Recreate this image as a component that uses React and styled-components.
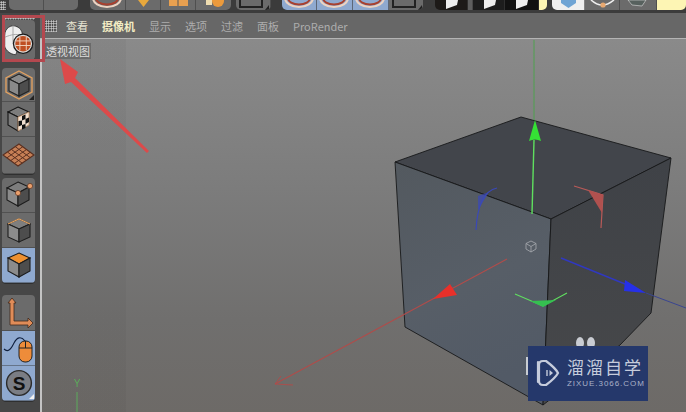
import styled, { createGlobalStyle } from "styled-components";

const GlobalStyle = createGlobalStyle`
  html, body {
    margin: 0;
    padding: 0;
    background: #474747;
    overflow: hidden;
  }
  * { box-sizing: border-box; }
`;

const Page = styled.div`
  position: relative;
  width: 686px;
  height: 412px;
  overflow: hidden;
  display: flex;
  flex-direction: column;
  font-family: "Noto Sans CJK SC", "Liberation Sans", sans-serif;
  background: #474747;
`;

const TopBar = styled.div`
  height: 13px;
  flex: none;
  display: flex;
  gap: 11px;
  background: #3b3b3b;
  overflow: hidden;
`;

const TopHatch = styled.div`
  width: 6px;
  height: 9px;
  margin: 1px -8px 0 0;
  background-image: radial-gradient(#dcdcdc 0.8px, transparent 1px);
  background-size: 2.5px 2.5px;
`;

const TopGroup = styled.div`
  display: flex;
  height: 10px;
  margin-left: ${(p) => p.$ml || 0}px;
  border-radius: 0 0 5px 5px;
  overflow: hidden;
`;

const TopButton = styled.div`
  position: relative;
  flex: none;
  width: ${(p) => p.$w || 35}px;
  height: 10px;
  background: ${(p) => p.$bg || "#6b6b6b"};
  border-right: 1px solid rgba(60, 60, 60, 0.6);
  overflow: hidden;

  svg {
    display: block;
  }
`;

const Body = styled.div`
  flex: 1;
  display: flex;
  min-height: 0;
`;

const Sidebar = styled.aside`
  width: 40px;
  flex: none;
  display: flex;
  flex-direction: column;
  padding: 4px 0 0 2px;
  background: #474747;
`;

const SidebarHatch = styled.div`
  width: 33px;
  height: 3px;
  flex: none;
  background-image: radial-gradient(#cfcfcf 0.7px, transparent 1px);
  background-size: 2.5px 2.5px;
`;

const ToolGroup = styled.div`
  width: 33px;
  margin-top: ${(p) => p.$mt || 0}px;
  border-radius: 4px;
  overflow: hidden;
  box-shadow: 0 1px 0 #2f2f2f;
`;

const ToolButton = styled.div`
  position: relative;
  height: ${(p) => p.$h || 35}px;
  display: flex;
  align-items: center;
  justify-content: center;
  background: ${(p) => (p.$active ? "#8fa9cf" : "#6b6b6b")};
  border-bottom: 1px solid rgba(50, 50, 50, 0.45);

  ${(p) =>
    p.$corner &&
    `&::after {
      content: "";
      position: absolute;
      right: 1px;
      bottom: 1px;
      border-left: 5px solid transparent;
      border-bottom: 5px solid ${p.$corner};
    }`}
`;

const Main = styled.main`
  flex: 1;
  display: flex;
  flex-direction: column;
  min-width: 0;
`;

const MenuBar = styled.nav`
  height: 26px;
  flex: none;
  display: flex;
  align-items: center;
  gap: 14px;
  padding: 1px 0 0 5px;
  background: #676767;
  border-bottom: 1px solid #b4b4b4;
`;

const Hatch = styled.div`
  width: 12px;
  height: 12px;
  margin-right: -5px;
  background-color: #3d3d3d;
  background-image: radial-gradient(#dcdcdc 0.8px, transparent 1px);
  background-size: 2.5px 2.5px;
`;

const MenuItem = styled.span`
  font-size: 11px;
  line-height: 14px;
  white-space: nowrap;
  color: ${(p) => (p.$tone === "bright" ? "#f3edc4" : p.$tone === "mid" ? "#e6e4d2" : "#adadad")};
  font-weight: ${(p) => (p.$tone === "bright" ? 700 : 400)};
`;

const Viewport = styled.section`
  position: relative;
  flex: 1;
  min-height: 0;
  border-left: 2px solid #c4c4c4;
  background:
    linear-gradient(to right, rgba(0, 0, 0, 0.035) 84px, transparent 84px),
    linear-gradient(to bottom, #8a8a8a 0%, #7c7c7c 40%, #706f6e 75%, #6d6a67 100%);
`;

const Scene = styled.svg`
  position: absolute;
  inset: 0;
  width: 100%;
  height: 100%;
  filter: blur(0.35px);
`;

const Tooltip = styled.div`
  position: absolute;
  left: 2px;
  top: 4px;
  height: 16px;
  padding: 0 1px 0 2px;
  font-size: 11px;
  line-height: 16px;
  color: #dedede;
  background: #6a6a6a;
`;

const Highlight = styled.div`
  position: absolute;
  left: 2px;
  top: 15px;
  width: 43px;
  height: 47px;
  border: 3px solid #b4484f;
`;

const Callout = styled.svg`
  position: absolute;
  left: 0;
  top: 0;
  width: 686px;
  height: 412px;
  pointer-events: none;
`;

const Watermark = styled.div`
  position: absolute;
  left: 528px;
  top: 346px;
  width: 120px;
  height: 55px;
  display: flex;
  align-items: center;
  gap: 7px;
  padding: 0 0 1px 8px;
  background: #25386b;
  color: #c6ccdc;
`;

const BrandText = styled.div`
  display: flex;
  flex-direction: column;
  gap: 2px;
`;

const BrandName = styled.div`
  font-size: 17px;
  line-height: 20px;
  letter-spacing: 2px;
  white-space: nowrap;
`;

const BrandUrl = styled.div`
  font-family: "Liberation Sans", sans-serif;
  font-size: 8px;
  line-height: 10px;
  letter-spacing: 0.95px;
  white-space: nowrap;
  color: #aab2c8;
`;

const Rings = () => (
  <svg width="35" height="10" viewBox="0 0 35 10">
    <ellipse cx="17" cy="-2" rx="14" ry="9" fill="none" stroke="#ecd3c2" strokeWidth="2" />
    <ellipse cx="17" cy="-2" rx="11" ry="6.5" fill="none" stroke="#a8402f" strokeWidth="2" />
  </svg>
);

const Corner = () => (
  <svg width="35" height="10" viewBox="0 0 35 10">
    <path d="M4 0V7H26V0" fill="none" stroke="#222" strokeWidth="2" />
    <path d="M29 10L33 10L33 5Z" fill="#222" />
  </svg>
);

const Clap = () => (
  <svg width="33" height="10" viewBox="0 0 33 10">
    <path d="M11 9L22 5L23 0H11Z" fill="#eee" />
  </svg>
);

const CubeIcon = ({ top = "#8b8b8b", edge = "#222", hex }) => (
  <svg width="28" height="30" viewBox="0 0 28 30">
    {hex && <path d="M14 1L27 8V22L14 29L1 22V8Z" fill="none" stroke="#e0a060" strokeWidth="1.4" />}
    <path d="M14 4L24 9L14 14L4 9Z" fill={top} stroke={edge} strokeWidth="1.1" />
    <path d="M4 9L14 14V26L4 21Z" fill="#8a8a8a" stroke={edge} strokeWidth="1.1" />
    <path d="M24 9L14 14V26L24 21Z" fill="#4d4d4d" stroke={edge} strokeWidth="1.1" />
  </svg>
);

const CheckerIcon = () => (
  <svg width="28" height="30" viewBox="0 0 28 30">
    <path d="M13 3L24 8L13 13L3 8Z" fill="#7c7c7c" stroke="#151515" strokeWidth="1.1" />
    <path d="M3 8L13 13V27L3 21Z" fill="#7a7a7a" stroke="#151515" strokeWidth="1.1" />
    <path d="M24 8L13 13V27L24 21Z" fill="#f1dfcf" stroke="#b98a66" strokeWidth="0.8" />
    <path d="M17 12L20.5 10.5V15L17 16.5ZM13.5 17L17 16.5V21L13.5 22.5ZM20.5 15L24 13.5V18L20.5 20ZM17 21L20.5 20V24L17 25.5Z" fill="#111" />
  </svg>
);

const MeshIcon = () => (
  <svg width="33" height="26" viewBox="0 0 33 26">
    <path d="M17 2L32 13L16 24L1 13Z" fill="#c67f55" stroke="#5a3020" strokeWidth="1.1" />
    <path d="M13.3 4.7L28.3 15.7M9.5 7.5L24.5 18.5M5.7 10.2L20.2 21.2M20.8 4.7L5 15.8M24.5 7.5L8.7 18.6M28.3 10.2L12.5 21.4" stroke="#5a3020" strokeWidth="1" />
  </svg>
);

const PointsIcon = () => (
  <svg width="30" height="32" viewBox="0 0 30 32">
    <path d="M14 3L25 8L14 14L3 9Z" fill="#7d7d7d" stroke="#1d1d1d" strokeWidth="1.1" />
    <path d="M3 9L14 14V27L3 21Z" fill="#8b8b8b" stroke="#1d1d1d" strokeWidth="1.1" />
    <path d="M25 8L14 14V27L25 21Z" fill="#4d4d4d" stroke="#1d1d1d" strokeWidth="1.1" />
    <circle cx="14" cy="14" r="2.6" fill="#eba06c" stroke="#5a3020" strokeWidth="0.7" />
    <circle cx="26" cy="7" r="2.6" fill="#eba06c" stroke="#5a3020" strokeWidth="0.7" />
  </svg>
);

const EdgesIcon = () => (
  <svg width="28" height="30" viewBox="0 0 28 30">
    <path d="M14 4L25 9L14 14L3 9Z" fill="#7e7e7e" stroke="#1d1d1d" strokeWidth="1.1" />
    <path d="M3 9L14 14V27L3 22Z" fill="#8b8b8b" stroke="#1d1d1d" strokeWidth="1.1" />
    <path d="M25 9L14 14V27L25 22Z" fill="#4d4d4d" stroke="#1d1d1d" strokeWidth="1.1" />
    <path d="M3 9L14 4L25 9" fill="none" stroke="#e0a060" strokeWidth="1.3" />
  </svg>
);

const FacesIcon = () => (
  <svg width="28" height="30" viewBox="0 0 28 30">
    <path d="M14 3L25 8L14 14L3 8Z" fill="#ee9030" stroke="#1d1d1d" strokeWidth="1.1" />
    <path d="M3 8L14 14V27L3 21Z" fill="#8b8b8b" stroke="#1d1d1d" strokeWidth="1.1" />
    <path d="M25 8L14 14V27L25 21Z" fill="#4d4d4d" stroke="#1d1d1d" strokeWidth="1.1" />
  </svg>
);

const AxisIcon = () => (
  <svg width="30" height="32" viewBox="0 0 30 32">
    <path d="M6 6H4L8 1L12 6H10V24H24V21L29 26L24 31V28H6Z" fill="#e08c58" stroke="#40281c" strokeWidth="0.8" />
  </svg>
);

const MouseIcon = () => (
  <svg width="31" height="31" viewBox="0 0 31 31">
    <path d="M1 16C5 20 8 16 11 10C14 4 18 3 22 8" fill="none" stroke="#10203e" strokeWidth="1.1" />
    <rect x="16" y="8" width="13" height="21" rx="6" fill="#ee8c3a" stroke="#222" strokeWidth="1" />
    <path d="M16 15H29M22.5 8V15" stroke="#222" strokeWidth="1" />
  </svg>
);

const SnapIcon = () => (
  <svg width="28" height="28" viewBox="0 0 28 28">
    <circle cx="14" cy="14" r="12.4" fill="#7a7d84" stroke="#2b2b2b" strokeWidth="1.4" />
    <text x="14" y="20.5" textAnchor="middle" fontFamily="Liberation Sans, sans-serif" fontSize="19" fontWeight="700" fill="#111">S</text>
  </svg>
);

const CameraIcon = () => (
  <svg width="36" height="36" viewBox="0 0 36 36">
    <path d="M3 13C3 5 10 1 15 3C22 5 23 12 22 16L15 34C8 34 2 27 3 23Z" fill="#eeeeee" stroke="#222" strokeWidth="0.8" />
    <path d="M3 15C10 12 16 11 21 13M12 2V22" fill="none" stroke="#9a9a9a" strokeWidth="0.9" />
    <circle cx="23" cy="22" r="10.5" fill="#dedede" stroke="#1c1c1c" strokeWidth="1.4" />
    <circle cx="23" cy="22" r="8.5" fill="#bf4f22" />
    <path d="M15 19H31M14.7 24H31.3M19.5 14.5V29.5M26.5 14.5V29.5" stroke="#f1d6c2" strokeWidth="1" />
  </svg>
);

const BrandLogo = () => (
  <svg width="24" height="30" viewBox="0 0 24 30" fill="none" stroke="#c6ccdc" strokeWidth="2.2">
    <path d="M2 4V24" strokeLinecap="round" />
    <path d="M8 3H11C15 6 21 11 23 15C21 19 15 24 11 27H8C5 27 4 25 4 23V7C4 5 5 3 8 3Z" transform="translate(-1 0)" />
    <path d="M11 12V18" strokeWidth="1.4" />
    <path d="M13.5 12L17 15L13.5 18Z" fill="#c6ccdc" stroke="none" />
  </svg>
);

// viewBox uses page coordinates so the cube points read straight off the screenshot
const CubeScene = () => (
  <Scene viewBox="42 39 644 373" preserveAspectRatio="none">
    <defs>
      <linearGradient id="frontFace" x1="0" y1="0" x2="0.3" y2="1">
        <stop offset="0" stopColor="#53595f" />
        <stop offset="0.6" stopColor="#575e67" />
        <stop offset="1" stopColor="#525a66" />
      </linearGradient>
      <linearGradient id="sideFace" x1="0" y1="0" x2="0" y2="1">
        <stop offset="0" stopColor="#3f4247" />
        <stop offset="1" stopColor="#47484a" />
      </linearGradient>
    </defs>

    <path d="M534 40V120" stroke="#4fa04f" strokeWidth="1" />
    <path d="M521 117L671 158L551 219L395 162Z" fill="#42454b" stroke="#17181a" strokeWidth="0.9" />
    <path d="M395 162L551 219L543 405L405 327Z" fill="url(#frontFace)" stroke="#17181a" strokeWidth="0.9" />
    <path d="M551 219L671 158L651 313L620 345L543 405Z" fill="url(#sideFace)" stroke="#17181a" strokeWidth="0.9" />

    <path d="M532 214L534 140" stroke="#5fe05f" strokeWidth="1.4" />
    <path d="M535 120L529 141Q535 138 541 141Z" fill="#35e035" />

    <path d="M507 259L275 384" stroke="#b04c4a" strokeWidth="1.1" />
    <path d="M433 299L450 284L457 295Z" fill="#e8302a" />
    <path d="M275 384L281 376M275 384L293 385" stroke="#b04c4a" strokeWidth="0.9" fill="none" />

    <path d="M561 258L625 284" stroke="#3038c0" strokeWidth="1.4" />
    <path d="M625 280L646 293L624 291Z" fill="#2630e8" />
    <path d="M646 293L686 308" stroke="#3a4590" strokeWidth="1" />

    <path d="M497 188Q478 192 476 230" fill="none" stroke="#3a48b8" strokeWidth="1.2" />
    <path d="M478 196L489 192L478 210Z" fill="#3a48b8" opacity="0.7" />
    <path d="M574 186L603 195L601 228" fill="none" stroke="#b85a58" strokeWidth="1.2" />
    <path d="M588 190L603 195L602 213Z" fill="#b0514f" />
    <path d="M515 294L543 306L567 293" fill="none" stroke="#60e060" strokeWidth="1.1" />
    <path d="M530 301L543 307L556 300Z" fill="#35c050" />

    <g fill="none" stroke="#a8abb0" strokeWidth="0.8">
      <path d="M531 241L536 243.5V249L531 252L526 249V243.5Z" />
      <path d="M526 243.5L531 246.5L536 243.5M531 246.5V252" />
    </g>

    <ellipse cx="580" cy="343" rx="4" ry="6" fill="#c9ccd2" />
    <ellipse cx="591" cy="343" rx="4" ry="6" fill="#c9ccd2" />
    <rect x="526" y="357" width="2" height="18" fill="#c8ccd2" />

    <text x="77" y="387" textAnchor="middle" fontFamily="Liberation Sans, sans-serif" fontSize="10" fill="#5cab5c">Y</text>
    <path d="M77 392V412" stroke="#5cab5c" strokeWidth="1" />
  </Scene>
);

const App = () => (
  <Page>
    <GlobalStyle />
    <TopBar>
      <TopHatch />
      <TopGroup>
        <TopButton />
        <TopButton />
      </TopGroup>
      <TopGroup $ml={1}>
        <TopButton $w={36}><Rings /></TopButton>
        <TopButton>
          <svg width="35" height="10" viewBox="0 0 35 10"><path d="M12 0H23L17.5 7Z" fill="#e8a83c" /></svg>
        </TopButton>
        <TopButton>
          <svg width="35" height="10" viewBox="0 0 35 10"><path d="M8 0H27V6H8Z" fill="#e8a050" /><path d="M17 0V6" stroke="#555" /></svg>
        </TopButton>
        <TopButton $w={36}>
          <svg width="36" height="10" viewBox="0 0 36 10"><circle cx="22" cy="1" r="6" fill="#eb9a3c" /><path d="M10 0H16V5H10Z" fill="#eedcb0" /></svg>
        </TopButton>
      </TopGroup>
      <TopGroup $ml={-6}>
        <TopButton><Corner /></TopButton>
      </TopGroup>
      <TopGroup>
        <TopButton $bg="#8fa9cf"><Rings /></TopButton>
        <TopButton $w={36} $bg="#8fa9cf"><Rings /></TopButton>
        <TopButton $w={36} $bg="#8fa9cf"><Rings /></TopButton>
        <TopButton><Corner /></TopButton>
      </TopGroup>
      <TopGroup $ml={1}>
        <TopButton $w={33} $bg="#1d1a18"><Clap /></TopButton>
        <TopButton $w={5} $bg="#5e5e5e" />
        <TopButton $w={32} $bg="#1d1d1d"><Clap /></TopButton>
        <TopButton $w={34} $bg="#111"><Clap /></TopButton>
        <TopButton $w={9} $bg="#fdf5b4" />
      </TopGroup>
      <TopGroup $ml={-6}>
        <TopButton $w={33} $bg="#efefef">
          <svg width="33" height="10" viewBox="0 0 33 10"><path d="M9 0H24V3L16.5 8L9 3Z" fill="#6fa4d4" /></svg>
        </TopButton>
        <TopButton $w={35}>
          <svg width="35" height="10" viewBox="0 0 35 10">
            <path d="M6 0Q17 10 29 0" fill="none" stroke="#eee" strokeWidth="1.6" />
            <circle cx="18" cy="5" r="2.6" fill="#e8a870" />
          </svg>
        </TopButton>
        <TopButton $w={37}>
          <svg width="37" height="10" viewBox="0 0 37 10"><path d="M8 0H26L22 6L12 5Z" fill="#57615e" stroke="#ddd" strokeWidth="0.6" /></svg>
        </TopButton>
        <TopButton $w={30} $bg="#fdf5b4" />
      </TopGroup>
    </TopBar>

    <Body>
      <Sidebar>
        <SidebarHatch />
        <ToolGroup>
          <ToolButton $h={40}><CameraIcon /></ToolButton>
        </ToolGroup>
        <ToolGroup $mt={8}>
          <ToolButton $h={34} $corner="#222"><CubeIcon hex /></ToolButton>
          <ToolButton $h={35}><CheckerIcon /></ToolButton>
          <ToolButton $h={37}><MeshIcon /></ToolButton>
        </ToolGroup>
        <ToolGroup $mt={4}>
          <ToolButton $h={35}><PointsIcon /></ToolButton>
          <ToolButton $h={35}><EdgesIcon /></ToolButton>
          <ToolButton $h={35} $active><FacesIcon /></ToolButton>
        </ToolGroup>
        <ToolGroup $mt={12}>
          <ToolButton $h={36}><AxisIcon /></ToolButton>
          <ToolButton $h={35} $active><MouseIcon /></ToolButton>
          <ToolButton $h={35} $active $corner="#f2f2f2"><SnapIcon /></ToolButton>
        </ToolGroup>
      </Sidebar>

      <Main>
        <MenuBar>
          <Hatch />
          <MenuItem $tone="mid">查看</MenuItem>
          <MenuItem $tone="bright">摄像机</MenuItem>
          <MenuItem>显示</MenuItem>
          <MenuItem>选项</MenuItem>
          <MenuItem>过滤</MenuItem>
          <MenuItem>面板</MenuItem>
          <MenuItem>ProRender</MenuItem>
        </MenuBar>
        <Viewport>
          <CubeScene />
          <Tooltip>透视视图</Tooltip>
        </Viewport>
      </Main>
    </Body>

    <Highlight />
    <Callout viewBox="0 0 686 412">
      <path d="M60 59L78 72L75 78L149 151L147 153L71 82L65 84Z" fill="#dc4a4a" />
    </Callout>

    <Watermark>
      <BrandLogo />
      <BrandText>
        <BrandName>溜溜自学</BrandName>
        <BrandUrl>ZIXUE.3066.COM</BrandUrl>
      </BrandText>
    </Watermark>
  </Page>
);

export default App;
